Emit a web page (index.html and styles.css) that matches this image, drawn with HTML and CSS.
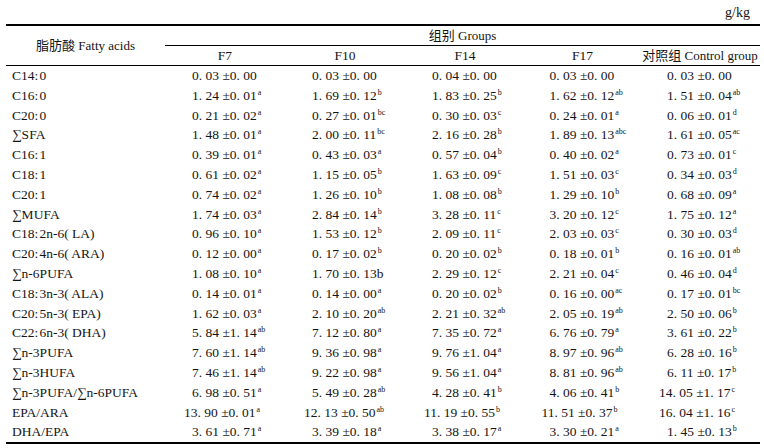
FILE: index.html
```html
<!DOCTYPE html>
<html lang="zh">
<head>
<meta charset="utf-8">
<title>Fatty acids</title>
<link rel="stylesheet" href="styles.css">
</head>
<body>
<div class="page">
  <div class="unit">g/kg</div>
  <table class="fa">
    <colgroup>
      <col class="c-name"><col class="c-w"><col class="c-w"><col class="c-w"><col class="c-n"><col class="c-w">
    </colgroup>
    <thead>
      <tr class="h1">
        <th rowspan="2" class="name-h">脂肪酸 Fatty acids</th>
        <th colspan="5" class="grp">组别 Groups</th>
      </tr>
      <tr class="h2">
        <th>F7</th><th>F10</th><th>F14</th><th>F17</th><th>对照组 Control group</th>
      </tr>
    </thead>
    <tbody>
      <tr><td class="n">C14:&#8202;0</td><td><span class="v">0. 03 ±0. 00</span></td><td><span class="v">0. 03 ±0. 00</span></td><td><span class="v">0. 04 ±0. 00</span></td><td><span class="v">0. 03 ±0. 00</span></td><td><span class="v">0. 03 ±0. 00</span></td></tr>
      <tr><td class="n">C16:&#8202;0</td><td><span class="v">1. 24 ±0. 01<sup>a</sup></span></td><td><span class="v">1. 69 ±0. 12<sup>b</sup></span></td><td><span class="v">1. 83 ±0. 25<sup>b</sup></span></td><td><span class="v">1. 62 ±0. 12<sup>ab</sup></span></td><td><span class="v">1. 51 ±0. 04<sup>ab</sup></span></td></tr>
      <tr><td class="n">C20:&#8202;0</td><td><span class="v">0. 21 ±0. 02<sup>a</sup></span></td><td><span class="v">0. 27 ±0. 01<sup>bc</sup></span></td><td><span class="v">0. 30 ±0. 03<sup>c</sup></span></td><td><span class="v">0. 24 ±0. 01<sup>a</sup></span></td><td><span class="v">0. 06 ±0. 01<sup>d</sup></span></td></tr>
      <tr><td class="n">∑SFA</td><td><span class="v">1. 48 ±0. 01<sup>a</sup></span></td><td><span class="v">2. 00 ±0. 11<sup>bc</sup></span></td><td><span class="v">2. 16 ±0. 28<sup>b</sup></span></td><td><span class="v">1. 89 ±0. 13<sup>abc</sup></span></td><td><span class="v">1. 61 ±0. 05<sup>ac</sup></span></td></tr>
      <tr><td class="n">C16:&#8202;1</td><td><span class="v">0. 39 ±0. 01<sup>a</sup></span></td><td><span class="v">0. 43 ±0. 03<sup>a</sup></span></td><td><span class="v">0. 57 ±0. 04<sup>b</sup></span></td><td><span class="v">0. 40 ±0. 02<sup>a</sup></span></td><td><span class="v">0. 73 ±0. 01<sup>c</sup></span></td></tr>
      <tr><td class="n">C18:&#8202;1</td><td><span class="v">0. 61 ±0. 02<sup>a</sup></span></td><td><span class="v">1. 15 ±0. 05<sup>b</sup></span></td><td><span class="v">1. 63 ±0. 09<sup>c</sup></span></td><td><span class="v">1. 51 ±0. 03<sup>c</sup></span></td><td><span class="v">0. 34 ±0. 03<sup>d</sup></span></td></tr>
      <tr><td class="n">C20:&#8202;1</td><td><span class="v">0. 74 ±0. 02<sup>a</sup></span></td><td><span class="v">1. 26 ±0. 10<sup>b</sup></span></td><td><span class="v">1. 08 ±0. 08<sup>b</sup></span></td><td><span class="v">1. 29 ±0. 10<sup>b</sup></span></td><td><span class="v">0. 68 ±0. 09<sup>a</sup></span></td></tr>
      <tr><td class="n">∑MUFA</td><td><span class="v">1. 74 ±0. 03<sup>a</sup></span></td><td><span class="v">2. 84 ±0. 14<sup>b</sup></span></td><td><span class="v">3. 28 ±0. 11<sup>c</sup></span></td><td><span class="v">3. 20 ±0. 12<sup>c</sup></span></td><td><span class="v">1. 75 ±0. 12<sup>a</sup></span></td></tr>
      <tr><td class="n">C18:&#8202;2n-6( LA)</td><td><span class="v">0. 96 ±0. 10<sup>a</sup></span></td><td><span class="v">1. 53 ±0. 12<sup>b</sup></span></td><td><span class="v">2. 09 ±0. 11<sup>c</sup></span></td><td><span class="v">2. 03 ±0. 03<sup>c</sup></span></td><td><span class="v">0. 30 ±0. 03<sup>d</sup></span></td></tr>
      <tr><td class="n">C20:&#8202;4n-6( ARA)</td><td><span class="v">0. 12 ±0. 00<sup>a</sup></span></td><td><span class="v">0. 17 ±0. 02<sup>b</sup></span></td><td><span class="v">0. 20 ±0. 02<sup>b</sup></span></td><td><span class="v">0. 18 ±0. 01<sup>b</sup></span></td><td><span class="v">0. 16 ±0. 01<sup>ab</sup></span></td></tr>
      <tr><td class="n">∑n-6PUFA</td><td><span class="v">1. 08 ±0. 10<sup>a</sup></span></td><td><span class="v">1. 70 ±0. 13b</span></td><td><span class="v">2. 29 ±0. 12<sup>c</sup></span></td><td><span class="v">2. 21 ±0. 04<sup>c</sup></span></td><td><span class="v">0. 46 ±0. 04<sup>d</sup></span></td></tr>
      <tr><td class="n">C18:&#8202;3n-3( ALA)</td><td><span class="v">0. 14 ±0. 01<sup>a</sup></span></td><td><span class="v">0. 14 ±0. 00<sup>a</sup></span></td><td><span class="v">0. 20 ±0. 02<sup>b</sup></span></td><td><span class="v">0. 16 ±0. 00<sup>ac</sup></span></td><td><span class="v">0. 17 ±0. 01<sup>bc</sup></span></td></tr>
      <tr><td class="n">C20:&#8202;5n-3( EPA)</td><td><span class="v">1. 62 ±0. 03<sup>a</sup></span></td><td><span class="v">2. 10 ±0. 20<sup>ab</sup></span></td><td><span class="v">2. 21 ±0. 32<sup>ab</sup></span></td><td><span class="v">2. 05 ±0. 19<sup>ab</sup></span></td><td><span class="v">2. 50 ±0. 06<sup>b</sup></span></td></tr>
      <tr><td class="n">C22:&#8202;6n-3( DHA)</td><td><span class="v">5. 84 ±1. 14<sup>ab</sup></span></td><td><span class="v">7. 12 ±0. 80<sup>a</sup></span></td><td><span class="v">7. 35 ±0. 72<sup>a</sup></span></td><td><span class="v">6. 76 ±0. 79<sup>a</sup></span></td><td><span class="v">3. 61 ±0. 22<sup>b</sup></span></td></tr>
      <tr><td class="n">∑n-3PUFA</td><td><span class="v">7. 60 ±1. 14<sup>ab</sup></span></td><td><span class="v">9. 36 ±0. 98<sup>a</sup></span></td><td><span class="v">9. 76 ±1. 04<sup>a</sup></span></td><td><span class="v">8. 97 ±0. 96<sup>ab</sup></span></td><td><span class="v">6. 28 ±0. 16<sup>b</sup></span></td></tr>
      <tr><td class="n">∑n-3HUFA</td><td><span class="v">7. 46 ±1. 14<sup>ab</sup></span></td><td><span class="v">9. 22 ±0. 98<sup>a</sup></span></td><td><span class="v">9. 56 ±1. 04<sup>a</sup></span></td><td><span class="v">8. 81 ±0. 96<sup>ab</sup></span></td><td><span class="v">6. 11 ±0. 17<sup>b</sup></span></td></tr>
      <tr><td class="n">∑n-3PUFA/∑n-6PUFA</td><td><span class="v">6. 98 ±0. 51<sup>a</sup></span></td><td><span class="v">5. 49 ±0. 28<sup>ab</sup></span></td><td><span class="v">4. 28 ±0. 41<sup>b</sup></span></td><td><span class="v">4. 06 ±0. 41<sup>b</sup></span></td><td><span class="v w2">14. 05 ±1. 17<sup>c</sup></span></td></tr>
      <tr><td class="n">EPA/ARA</td><td><span class="v w2">13. 90 ±0. 01<sup>a</sup></span></td><td><span class="v w2">12. 13 ±0. 50<sup>ab</sup></span></td><td><span class="v w2">11. 19 ±0. 55<sup>b</sup></span></td><td><span class="v w2">11. 51 ±0. 37<sup>b</sup></span></td><td><span class="v w2">16. 04 ±1. 16<sup>c</sup></span></td></tr>
      <tr><td class="n">DHA/EPA</td><td><span class="v">3. 61 ±0. 71<sup>a</sup></span></td><td><span class="v">3. 39 ±0. 18<sup>a</sup></span></td><td><span class="v">3. 38 ±0. 17<sup>a</sup></span></td><td><span class="v">3. 30 ±0. 21<sup>a</sup></span></td><td><span class="v">1. 45 ±0. 13<sup>b</sup></span></td></tr>
    </tbody>
  </table>
</div>
</body>
</html>
```

FILE: styles.css
```css
html, body {
  margin: 0;
  padding: 0;
  background: #fff;
}
body {
  font-family: "Liberation Serif", "Noto Sans CJK SC", serif;
  font-size: 13.5px;
  color: #141414;
}
.page {
  width: 764px;
  height: 448px;
  overflow: hidden;
}
.unit {
  height: 24px;
  line-height: 26px;
  text-align: right;
  padding-right: 14px;
  font-size: 14px;
}
.fa {
  margin-left: 6px;
  width: 754px;
  table-layout: fixed;
  border-collapse: collapse;
  border-top: 2px solid #000;
  border-bottom: 2px solid #000;
}
.c-name { width: 159px; }
.c-w { width: 120px; }
.c-n { width: 115px; }
th, td {
  padding: 0;
  font-weight: normal;
  white-space: nowrap;
  overflow: visible;
}
.h1 th { height: 19px; line-height: 19px; }
.h2 th { height: 19px; line-height: 19px; border-bottom: 1px solid #000; text-align: center; }
.name-h { border-bottom: 1px solid #000; text-align: center; vertical-align: middle; font-size: 13px; }
.grp { border-bottom: 1px solid #000; text-align: center; font-size: 13px; }
.h2 th:last-child { font-size: 13px; }
td {
  height: 19.8px;
  line-height: 19.8px;
  text-align: center;
  vertical-align: top;
}
td.n {
  text-align: left;
  padding-left: 6px;
}
.v {
  display: inline-block;
  vertical-align: top;
  height: 19.8px;
  width: 66px;
  text-align: left;
}
.v.w2 { text-indent: -8px; }
sup {
  font-size: 8px;
  line-height: 0;
  vertical-align: 5px;
  margin-left: 1px;
}
```
